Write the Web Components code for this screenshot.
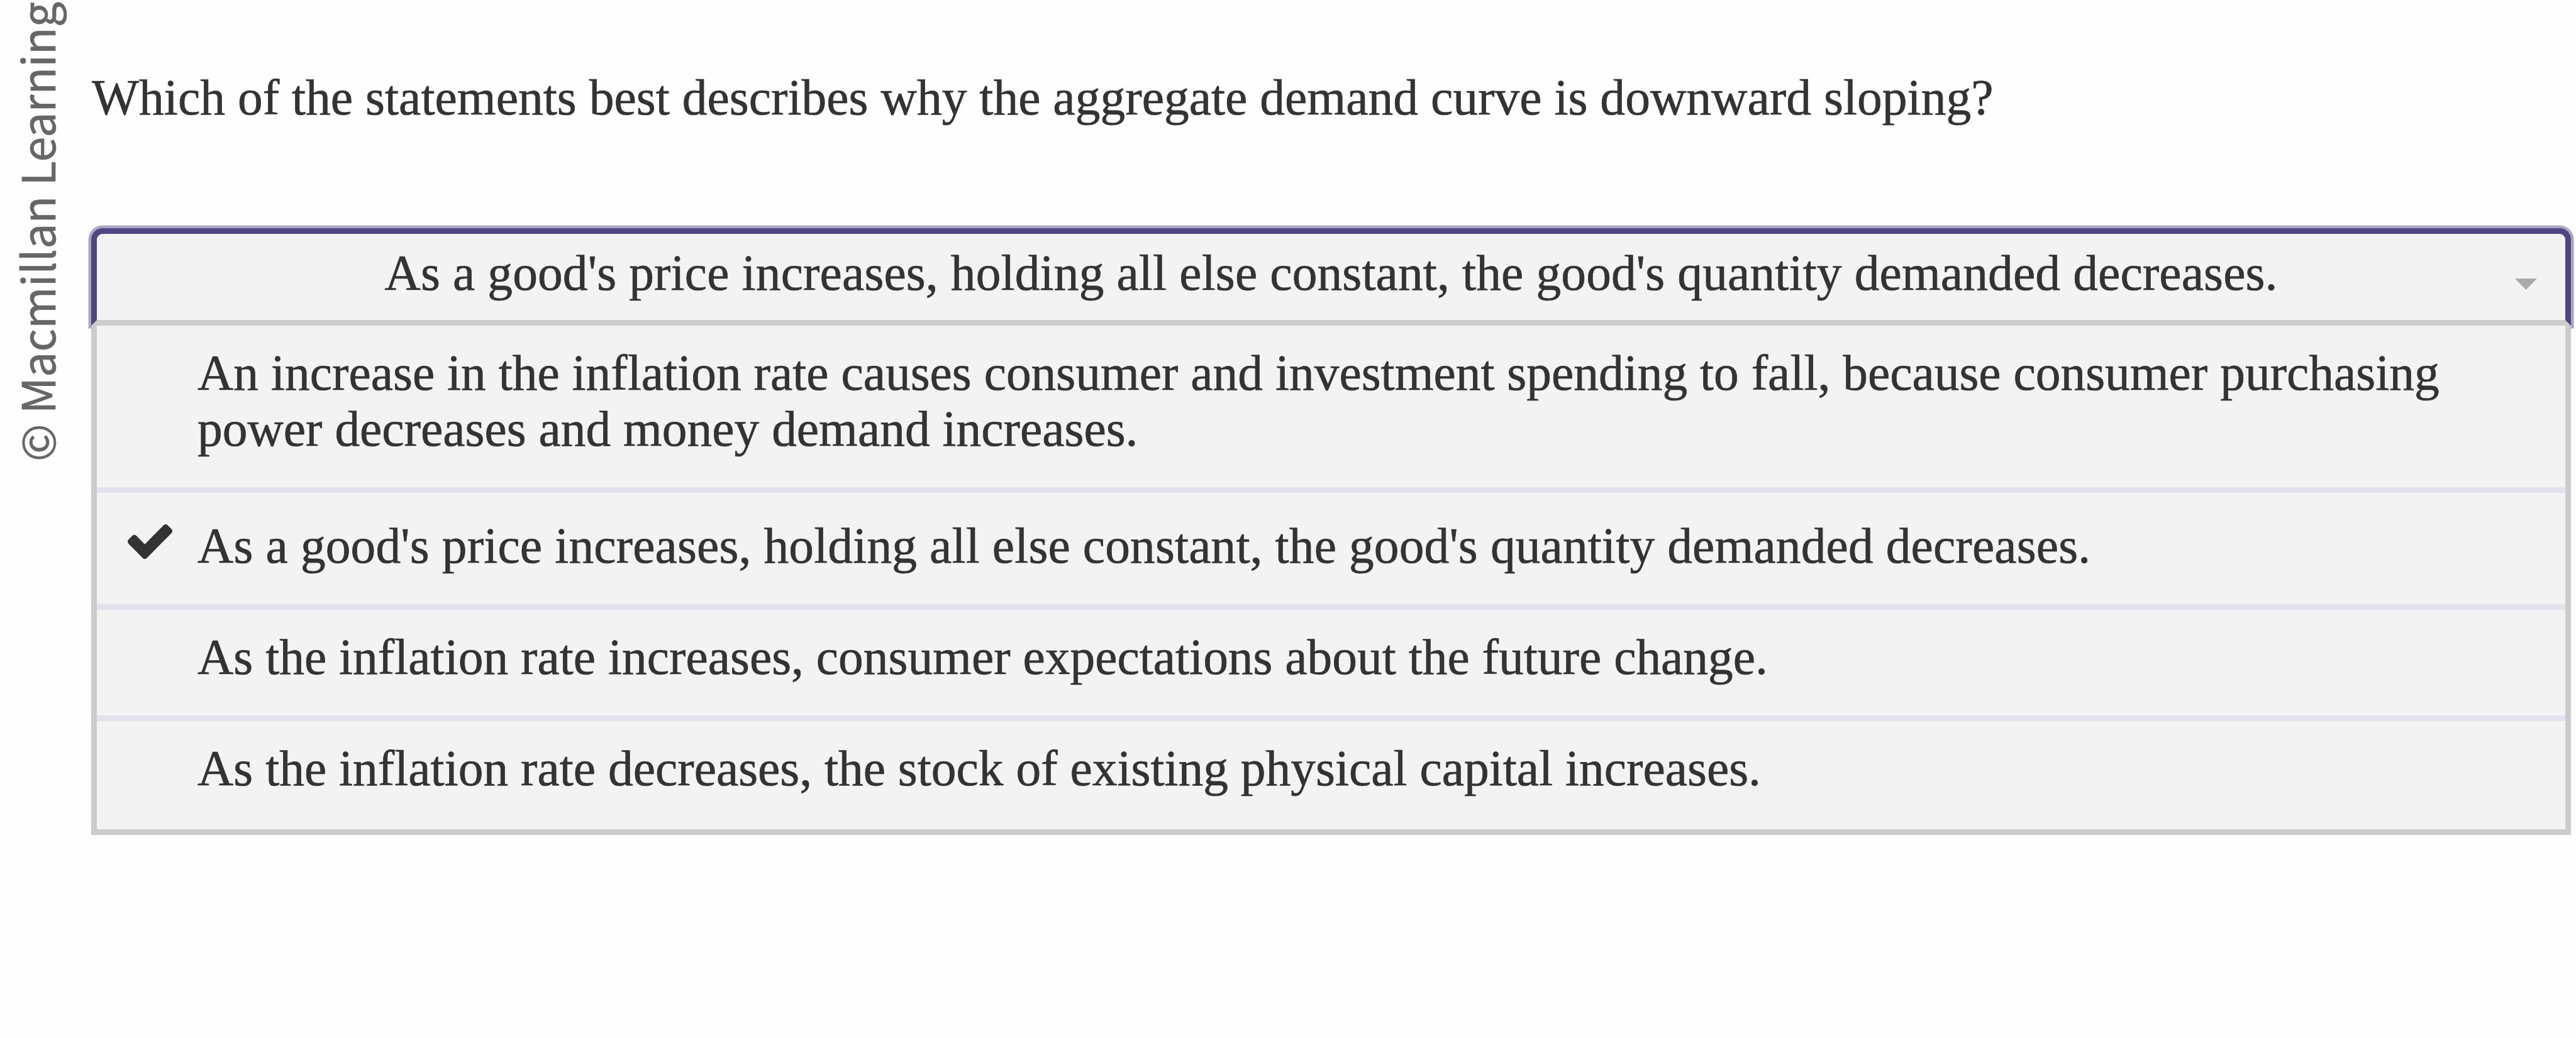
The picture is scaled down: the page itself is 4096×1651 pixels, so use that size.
<!DOCTYPE html>
<html lang="en">
<head>
    <meta charset="UTF-8">
    <meta name="viewport" content="width=device-width, initial-scale=1.0">
    <title>Aggregate demand question</title>
    <style>
        html, body {margin: 0; height: 100%}
        body {
            background: #fefefe;
            color: #333;
            font: 79.45px/89.5px "Liberation Serif", "Times New Roman", serif;
            -webkit-text-stroke: .7px;
            overflow: hidden;
        }
    </style>
</head>
<body>
    <template id="question-page">
        <style>
            :host {display: flex; height: 100%; box-sizing: border-box; padding-right: 8px}
            aside {flex: none; width: 145px}
            main {flex: 1; min-width: 0; padding-top: 111px}
        </style>
        <aside><slot name="credit"></slot></aside>
        <main><slot></slot></main>
    </template>

    <template id="copyright-label">
        <style>
            :host {
                display: block;
                box-sizing: border-box;
                height: 734px;
                width: 104px;
                margin-left: 5px;
                writing-mode: vertical-rl;
                text-orientation: sideways;
                transform: rotate(180deg);
                white-space: nowrap;
                color: #666;
                font: 71.8px/104px "Noto Sans CJK SC", sans-serif;
            }
        </style>
        <slot></slot>
    </template>

    <template id="question-text">
        <style>
            :host {display: block; margin-bottom: 162.5px; padding-left: 1px; font-size: 79.54px}
        </style>
        <slot></slot>
    </template>

    <template id="answer-select">
        <style>
            :host {display: block}
            .box {
                display: flex;
                box-sizing: border-box;
                height: 155px;
                padding-top: 17.5px;
                background: #f3f3f3;
                border: 9px solid #4f4681;
                border-bottom-color: #ccc;
                border-radius: 18px 18px 0 0;
                box-shadow: 0 0 0 4.5px #aca7c4;
            }
            .value {flex: 1; text-align: center; letter-spacing: .13px; padding-left: 80px}
            svg {flex: none; width: 35px; height: 18px; margin: 53.5px 45px 0 0}
            /* the open list covers the lower edge of the focus ring */
            .menu {
                position: relative;
                background: #f3f3f3;
                border: 9px solid #ccc;
                border-top: 0;
            }
        </style>
        <div class="box">
            <span class="value"></span>
            <svg viewBox="0 0 35 18"><path d="M0 0h35L17.5 18z" fill="#aaa"/></svg>
        </div>
        <div class="menu"><slot></slot></div>
    </template>

    <template id="answer-option">
        <style>
            :host {
                display: flex;
                box-sizing: border-box;
                height: 177px;
                padding: 31px 59px 0 49px;
                border-bottom: 9px solid #e3e2ec;
            }
            :host(:first-child) {height: 266px; padding-top: 30.5px}
            :host(:last-child) {height: 172px; border-bottom: 0}
            :host([selected]) {height: 186px; padding-top: 40px; letter-spacing: .13px}
            .mark {flex: none; width: 111px}
            svg {display: none; width: 71px; height: 55px; margin-top: 9.5px}
            :host([selected]) svg {display: block}
            .text {flex: 1}
        </style>
        <div class="mark">
            <svg viewBox="121 334 1550 1188" preserveAspectRatio="none"><path fill="#333" d="M1671 566q0 40-28 68l-724 724-136 136q-28 28-68 28t-68-28l-136-136-362-362q-28-28-28-68t28-68l136-136q28-28 68-28t68 28l294 295 656-657q28-28 68-28t68 28l136 136q28 28 28 68z"/></svg>
        </div>
        <div class="text"><slot></slot></div>
    </template>

    <question-page>
        <copyright-label slot="credit">© Macmillan Learning</copyright-label>
        <question-text>Which of the statements best describes why the aggregate demand curve is downward sloping?</question-text>
        <answer-select>
            <answer-option>An increase in the inflation rate causes consumer and investment spending to fall, because consumer purchasing power decreases and money demand increases.</answer-option>
            <answer-option selected>As a good's price increases, holding all else constant, the good's quantity demanded decreases.</answer-option>
            <answer-option>As the inflation rate increases, consumer expectations about the future change.</answer-option>
            <answer-option>As the inflation rate decreases, the stock of existing physical capital increases.</answer-option>
        </answer-select>
    </question-page>

    <script type="text/javascript">
        class TemplateElement extends HTMLElement {
            connectedCallback() {
                if(this.shadowRoot) return
                let template = document.getElementById(this.localName)
                this.attachShadow({mode:"open"}).appendChild(template.content.cloneNode(true))
            }
        }
        window.customElements.define("question-page", class extends TemplateElement {})
        window.customElements.define("copyright-label", class extends TemplateElement {})
        window.customElements.define("question-text", class extends TemplateElement {})
        window.customElements.define("answer-option", class extends TemplateElement {})
        window.customElements.define("answer-select", class extends TemplateElement {
            connectedCallback() {
                super.connectedCallback()
                this.renderValue()
                this.addEventListener("click",(e) => {
                    let option = e.target.closest("answer-option")
                    if(!option) return
                    this.querySelectorAll("answer-option").forEach(o => o.toggleAttribute("selected", o == option))
                    this.renderValue()
                })
            }
            renderValue() {
                let option = this.querySelector("answer-option[selected]")
                this.shadowRoot.querySelector(".value").textContent = option ? option.textContent : ""
            }
        })
    </script>
</body>
</html>
